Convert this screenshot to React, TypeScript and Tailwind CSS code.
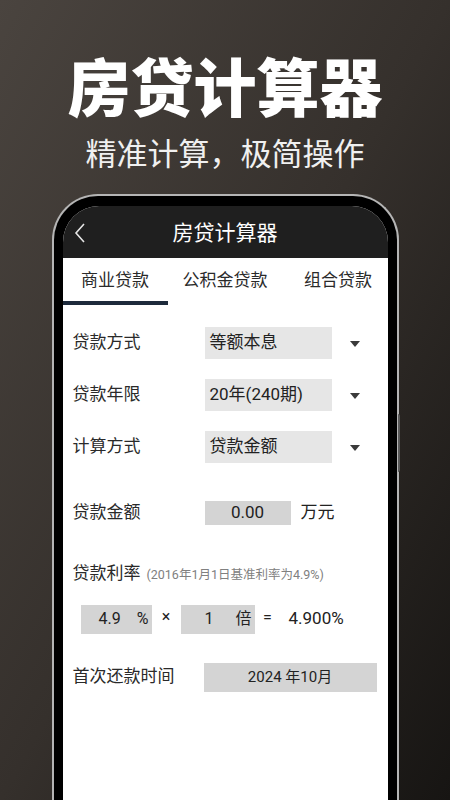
import React from 'react';

const font = "font-['Roboto','Noto_Sans_CJK_SC',sans-serif]";

function Caret() {
    return (
        <svg width="10" height="6" viewBox="0 0 10 6" className="shrink-0">
            <path d="M0 0 L10 0 L5 6 Z" fill="#3a3a3a" />
        </svg>
    );
}

function SelectRow({ label, value }: { label: string; value: string }) {
    return (
        <div className="flex items-center h-[32px] mb-[20px]">
            <div className="w-[142px] pl-[10px] text-[17px] text-[#2a2a2a]">{label}</div>
            <div className="w-[127px] h-[32px] bg-[#e6e6e6] flex items-center pl-[5px] text-[17px] text-[#222]">{value}</div>
            <div className="w-[46px] flex justify-center pt-[1px]">
                <Caret />
            </div>
        </div>
    );
}

export default function App() {
    return (
        <div className={`w-full h-[800px] overflow-hidden bg-gradient-to-br from-[#4a443f] via-[#35302c] to-[#171513] flex flex-col items-center ${font}`}>

            {/* Headline */}
            <h1 className="mt-[52px] text-[63px] leading-none font-black text-white font-['Noto_Sans_CJK_SC',sans-serif]">
                房贷计算器
            </h1>
            <p className="mt-[21px] text-[31px] leading-none text-[#f0f0f0] font-['Noto_Sans_CJK_SC',sans-serif]">
                精准计算，极简操作
            </p>

            {/* Phone */}
            <div className="relative mt-[27px] w-[347px] flex-1 rounded-t-[46px] border-[2px] border-b-0 border-[#b5b5b5] bg-black pt-[10px] px-[9px]">
                <div className="absolute right-[-3px] top-[218px] w-[2px] h-[58px] bg-[#5a5a5a] rounded-r" />
                <div className="h-full rounded-t-[36px] overflow-hidden bg-white flex flex-col">

                    {/* Title bar */}
                    <div className="h-[52px] bg-[#1f1f1f] flex items-center relative shrink-0">
                        <svg width="12" height="20" viewBox="0 0 12 20" className="absolute left-[11px] top-[17px]">
                            <path d="M10 1 L2 10 L10 19" fill="none" stroke="#e5e5e5" strokeWidth="1.6" />
                        </svg>
                        <div className="w-full text-center text-[21px] text-white pt-[3px]">房贷计算器</div>
                    </div>

                    {/* Tabs */}
                    <div className="h-[47px] flex shrink-0">
                        <div className="w-[105px] flex flex-col">
                            <div className="flex-1 flex items-center justify-center text-[17px] text-[#2a2a2a] pt-[2px]">商业贷款</div>
                            <div className="h-[4px] bg-[#1d2a3b]" />
                        </div>
                        <div className="w-[115px] flex items-center justify-center text-[17px] text-[#2a2a2a] pb-[2px]">公积金贷款</div>
                        <div className="flex-1 flex items-center justify-center text-[17px] text-[#2a2a2a] pb-[2px] pl-[6px]">组合贷款</div>
                    </div>

                    {/* Form */}
                    <div className="pt-[22px] flex flex-col">
                        <SelectRow label="贷款方式" value="等额本息" />
                        <SelectRow label="贷款年限" value="20年(240期)" />
                        <SelectRow label="计算方式" value="贷款金额" />

                        <div className="flex items-center h-[24px] mt-[18px]">
                            <div className="w-[142px] pl-[10px] text-[17px] text-[#2a2a2a]">贷款金额</div>
                            <div className="w-[86px] h-[24px] bg-[#d4d4d4] flex items-center justify-center text-[17px] text-[#222]">0.00</div>
                            <div className="ml-[10px] text-[17px] text-[#222]">万元</div>
                        </div>

                        <div className="flex items-baseline mt-[36px] pl-[10px]">
                            <span className="text-[17px] text-[#2a2a2a]">贷款利率</span>
                            <span className="ml-[6px] text-[12.5px] text-[#808080]">(2016年1月1日基准利率为4.9%)</span>
                        </div>

                        <div className="flex items-center mt-[18px] pl-[18px] h-[29px]">
                            <div className="w-[71px] h-[29px] bg-[#d4d4d4] flex items-center text-[16px] text-[#222]">
                                <span className="ml-[18px]">4.9</span>
                                <span className="ml-[16px]">%</span>
                            </div>
                            <div className="w-[29px] text-center text-[16px] text-[#222] pb-[4px]">×</div>
                            <div className="w-[74px] h-[29px] bg-[#d4d4d4] flex items-center text-[16px] text-[#222]">
                                <span className="ml-[24px]">1</span>
                                <span className="ml-[22px]">倍</span>
                            </div>
                            <div className="w-[26px] text-center text-[16px] text-[#222] pb-[2px]">=</div>
                            <div className="ml-[8px] text-[17px] text-[#222]">4.900%</div>
                        </div>

                        <div className="flex items-center mt-[29px] h-[29px]">
                            <div className="w-[141px] pl-[10px] text-[17px] text-[#2a2a2a]">首次还款时间</div>
                            <div className="w-[173px] h-[29px] bg-[#d4d4d4] flex items-center justify-center text-[15px] text-[#222]">2024 年10月</div>
                        </div>
                    </div>
                </div>
            </div>
        </div>
    );
}
